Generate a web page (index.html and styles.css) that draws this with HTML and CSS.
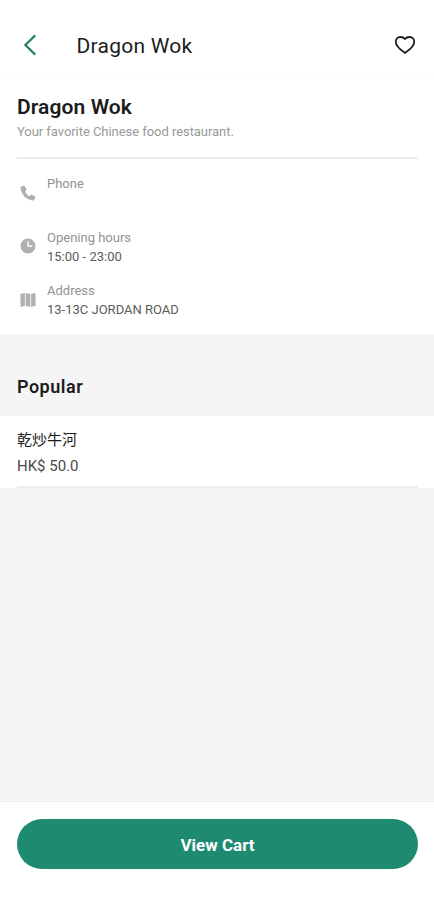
FILE: index.html
```html
<!DOCTYPE html>
<html lang="en">
<head>
    <meta charset="UTF-8">
    <meta name="viewport" content="width=device-width, initial-scale=1.0">
    <title>Dragon Wok</title>
    <link rel="stylesheet" href="styles.css">
</head>
<body>
    <header class="top-bar">
        <button type="button" class="icon-button back-button" aria-label="Back">
            <svg width="14" height="22" viewBox="0 0 14 22" fill="none" stroke="#27835f" stroke-width="2.2">
                <path d="M12.2 1.4 2.4 11l9.8 9.6"/>
            </svg>
        </button>
        <h1 class="top-title">Dragon Wok</h1>
        <button type="button" class="icon-button" aria-label="Favorite">
            <svg width="22" height="20" viewBox="0 0 22 20" fill="none" stroke="#1c1c1c" stroke-width="1.8" stroke-linejoin="round">
                <path d="M11 18C8.800 16.500 1.800 11.900 1.800 6.800C1.800 4 3.700 2 6.300 2C8.300 2 10 2.600 11 4C12 2.600 13.700 2 15.700 2C18.300 2 20.200 4 20.200 6.800C20.200 11.900 13.200 16.500 11 18Z"/>
            </svg>
        </button>
    </header>

    <main>
        <section class="details">
            <div class="intro">
                <h2 class="name">Dragon Wok</h2>
                <p class="tagline">Your favorite Chinese food restaurant.</p>
            </div>

            <ul class="info-list">
                <li class="info">
                    <svg class="info-icon" viewBox="0 0 16 16">
                        <path d="M3.200 .8 1.300 1.500C.7 1.800.4 2.400.5 3.100 1.100 9.600 6.200 14.800 12.700 15.500c.8.100 1.400-.2 1.700-.9l.9-2.100c.2-.5 0-1-.5-1.300l-3-1.500c-.5-.2-1-.1-1.300.3l-1 1.200C7.500 10.200 5.900 8.500 5 6.400l1.100-1c.4-.3.5-.8.3-1.300L4.700 1.200C4.400.7 3.800.5 3.200.8Z"/>
                    </svg>
                    <div>
                        <p class="label">Phone</p>
                        <p class="value"></p>
                    </div>
                </li>
                <li class="info">
                    <svg class="info-icon" viewBox="0 0 16 16">
                        <circle cx="8" cy="8" r="7.500"/>
                        <path d="M8 3.200V8h4.300" fill="none" stroke="#fff" stroke-width="1.400"/>
                    </svg>
                    <div>
                        <p class="label">Opening hours</p>
                        <p class="value">15:00 - 23:00</p>
                    </div>
                </li>
                <li class="info">
                    <svg class="info-icon" viewBox="0 0 16 16">
                        <path d="M.5 2 4.900.9v12.800L.5 14.900ZM5.700.9l4.600 1.200v12.800l-4.600-1.200ZM11.100 2.100 15.500.9v12.800l-4.400 1.200Z"/>
                    </svg>
                    <div>
                        <p class="label">Address</p>
                        <p class="value">13-13C JORDAN ROAD</p>
                    </div>
                </li>
            </ul>
        </section>

        <section>
            <h2 class="section-title">Popular</h2>
            <div class="menu-item">
                <div class="menu-item-body">
                    <h3 class="dish" lang="zh-Hant">乾炒牛河</h3>
                    <p class="price">HK$ 50.0</p>
                </div>
            </div>
        </section>
    </main>

    <footer class="cart-bar">
        <button type="button" class="cart-button">View Cart</button>
    </footer>
</body>
</html>
```

FILE: styles.css
```css
* {
    margin: 0;
    padding: 0;
    box-sizing: border-box;
}

body {
    display: flex;
    flex-direction: column;
    height: 100vh;
    font-family: Roboto, 'Noto Sans CJK TC', sans-serif;
    background-color: #f5f5f5;
    color: #1c1c1c;
}

button {
    border: none;
    font-family: inherit;
    cursor: pointer;
}

main {
    flex: 1;
}

/* top bar */
.top-bar {
    display: flex;
    align-items: center;
    height: 74px;
    padding: 17px 18px 0 23px;
    background-color: #fff;
    border-bottom: 1px solid #fcfcfc;
}

.icon-button {
    display: flex;
    background: none;
}

.back-button {
    width: 53.500px;
}

.top-title {
    flex: 1;
    padding-top: 2px;
    font-size: 21px;
    font-weight: 400;
    letter-spacing: 0.25px;
}

/* restaurant details */
.details {
    height: 260px;
    padding: 20px 16px 0 17px;
    background-color: #fff;
}

.intro {
    height: 65px;
    border-bottom: 2px solid #ededed;
}

.name {
    font-size: 21px;
    font-weight: 600;
    line-height: 27px;
    letter-spacing: 0.1px;
}

.tagline {
    font-size: 13px;
    line-height: 22px;
    letter-spacing: -0.05px;
    color: #999;
}

.info-list {
    list-style: none;
    padding-top: 15px;
}

.info {
    display: flex;
    align-items: center;
    gap: 11px;
    height: 53.500px;
    padding-left: 3px;
}

.info > div {
    height: 53.500px;
}

.info-icon {
    width: 16px;
    height: 16px;
    margin-bottom: 16px;
    fill: #b0b0b0;
}

.label,
.value {
    font-size: 13px;
    line-height: 19px;
}

.label {
    color: #929292;
}

.value {
    color: #5c5c5c;
}

/* menu */
.section-title {
    height: 82px;
    padding: 41px 17px 0;
    font-size: 18px;
    font-weight: 600;
    line-height: 24px;
    letter-spacing: 0.5px;
}

.menu-item {
    height: 72px;
    padding: 0 16px 0 17px;
    background-color: #fff;
}

.menu-item-body {
    height: 72px;
    padding-top: 11px;
    border-bottom: 2px solid #eee;
}

.dish {
    font-size: 15px;
    font-weight: 400;
    line-height: 26px;
}

.price {
    font-size: 15px;
    line-height: 26px;
    color: #4a4a4a;
}

/* bottom bar */
.cart-bar {
    height: 99px;
    padding: 17px 16px 0 17px;
    background-color: #fff;
    border-top: 1px solid #eee;
}

.cart-button {
    width: 100%;
    height: 50px;
    padding-top: 1px;
    border-radius: 25px;
    background-color: #1e8a70;
    color: #fff;
    font-size: 17px;
    font-weight: 700;
}
```
